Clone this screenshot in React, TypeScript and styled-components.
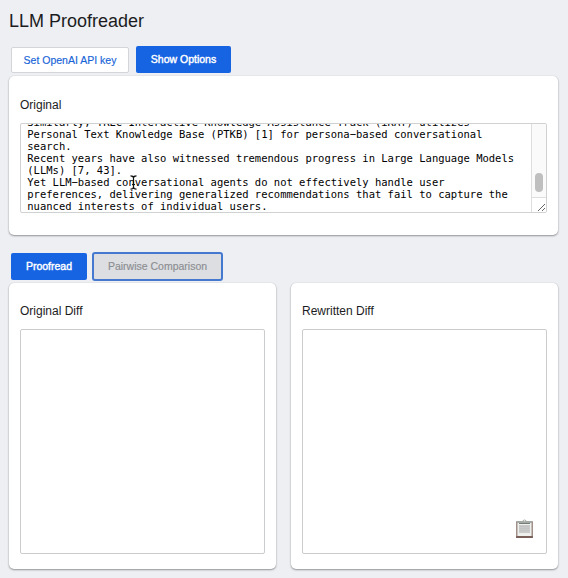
import React from "react";
import styled, { createGlobalStyle, css } from "styled-components";

const GlobalStyle = createGlobalStyle`
  * { box-sizing: border-box; }
  body {
    margin: 0;
    background: #edeff3;
    color: #1c1c1e;
    font-family: "Liberation Sans", Arial, sans-serif;
  }
`;

const Page = styled.main`
  height: 578px;
  padding: 10px 10px 9px 9px;
  display: flex;
  flex-direction: column;
  overflow: hidden;
`;

const Title = styled.h1`
  margin: 0;
  height: 36px;
  font-size: 18px;
  line-height: 22px;
  font-weight: 400;
  white-space: nowrap;
`;

const Toolbar = styled.div<{ $gap: number; $height: number; $top: number; $bottom: number }>`
  display: flex;
  align-items: center;
  gap: ${(p) => p.$gap}px;
  height: ${(p) => p.$height}px;
  padding: ${(p) => p.$top}px 0 ${(p) => p.$bottom}px 2px;
`;

const Button = styled.button<{ $variant: "outline" | "primary" | "disabled"; $width: number }>`
  width: ${(p) => p.$width}px;
  height: 27px;
  padding: 0;
  border-radius: 2px;
  font-family: inherit;
  font-size: 10.5px;
  line-height: 13px;
  white-space: nowrap;
  ${(p) =>
    p.$variant === "primary" &&
    css`
      border: 0;
      background: #1764e3;
      color: #fff;
      -webkit-text-stroke: 0.4px #fff;
    `}
  ${(p) =>
    p.$variant === "outline" &&
    css`
      height: 26px;
      margin-top: 1px;
      border: 1px solid #d3d5d9;
      background: #fff;
      color: #1764d8;
      -webkit-text-stroke: 0.15px #1764d8;
    `}
  ${(p) =>
    p.$variant === "disabled" &&
    css`
      height: 29px;
      border: 2px solid #4479cf;
      border-radius: 3px;
      background: #dcdee2;
      color: #8c8d91;
      -webkit-text-stroke: 0.15px #8c8d91;
    `}
`;

const Card = styled.section<{ $height: number; $top: number }>`
  flex: 1;
  height: ${(p) => p.$height}px;
  padding: ${(p) => p.$top}px 11px 0;
  border-radius: 5px;
  background: #fff;
  box-shadow: 0 1px 2px rgba(0, 0, 0, 0.38), 0 0 1px rgba(0, 0, 0, 0.16);
`;

const Rows = styled.div`
  display: flex;
  gap: 15px;
`;

const Label = styled.h2`
  margin: 0;
  height: 25px;
  font-size: 12px;
  line-height: 14px;
  font-weight: 400;
`;

const Editor = styled.div`
  display: flex;
  height: 90px;
  border: 1px solid #d0d1d3;
  border-radius: 2px;
  overflow: hidden;
  position: relative;
`;

const EditorText = styled.div`
  flex: 1;
  display: flex;
  flex-direction: column;
  justify-content: flex-end;
  padding: 0 0 0 6.3px;
  color: #000;
  font: 10.5px/12px "DejaVu Sans Mono", monospace;
  white-space: pre;
  overflow: hidden;
`;

const ScrollTrack = styled.div`
  width: 15px;
  display: flex;
  flex-direction: column;
  border-left: 1px solid #dedede;
  background: #fafafa;
`;

const ScrollThumb = styled.div`
  width: 8px;
  height: 19px;
  margin: 49px 0 5px 3px;
  border-radius: 4px;
  background: #bfbfbf;
`;

const ResizeCorner = styled.div`
  flex: 1;
  border-top: 1px solid #dedede;
  background: #fff;
  svg { display: block; margin: 5px 0 0 5px; }
`;

const TextCursor = styled.svg`
  position: absolute;
  left: 109px;
  top: 51px;
`;

const DiffBox = styled.div`
  height: 225px;
  border: 1px solid #cbcccd;
  border-radius: 2px;
  display: flex;
  align-items: flex-end;
  justify-content: flex-end;
  padding: 0 12px 14px 0;
`;

const lines = [
  "Similarly, TREC Interactive Knowledge Assistance Track (iKAT) utilizes",
  "Personal Text Knowledge Base (PTKB) [1] for persona−based conversational",
  "search.",
  "Recent years have also witnessed tremendous progress in Large Language Models",
  "(LLMs) [7, 43].",
  "Yet LLM−based conversational agents do not effectively handle user",
  "preferences, delivering generalized recommendations that fail to capture the",
  "nuanced interests of individual users.",
];

const ClipboardIcon = () => (
  <svg width="19" height="20" viewBox="0 0 19 20" aria-label="Copy">
    <rect x="1" y="2" width="17" height="17" rx="1" fill="#a09089" />
    <rect x="1" y="17" width="17" height="2" rx=".8" fill="#7a5f59" />
    <rect x="2.5" y="3.5" width="14" height="13.5" fill="#eef0ee" />
    <rect x="4" y="6" width="11" height="8" fill="#c9cac9" />
    <path d="M5 7.5h9M5 9.5h9M5 11.5h9" stroke="#bfc0c0" strokeWidth=".7" />
    <path d="M2 2h5.5Q8 .5 9.5.5T11.5 2H17v2H2Z" fill="#a3aaa6" />
    <path d="M4 4.5h11" stroke="#777e79" />
    <circle cx="9.5" cy="1.8" r=".7" fill="#e8ebe9" />
  </svg>
);

export default function App() {
  return (
    <>
      <GlobalStyle />
      <Page>
        <Title>LLM Proofreader</Title>
        <Toolbar $gap={7} $height={30} $top={0} $bottom={3}>
          <Button $variant="outline" $width={118}>Set OpenAI API key</Button>
          <Button $variant="primary" $width={95}>Show Options</Button>
        </Toolbar>
        <Rows>
          <Card $height={159} $top={22}>
            <Label>Original</Label>
            <Editor>
              <EditorText>
                {lines.map((line) => <div key={line}>{line}</div>)}
              </EditorText>
              <ScrollTrack>
                <ScrollThumb />
                <ResizeCorner>
                  <svg width="9" height="9" viewBox="0 0 9 9" stroke="#555" strokeWidth=".9">
                    <path d="M1 8L8 1M5 8L8 5" />
                  </svg>
                </ResizeCorner>
              </ScrollTrack>
              <TextCursor width="7" height="15" viewBox="0 0 7 15" fill="none">
                <path d="M.5.8Q3.5.8 3.5 3V12Q3.5 14.2.5 14.2M6.5.8Q3.5.8 3.5 3M3.5 12Q3.5 14.2 6.5 14.2M2 9.5H5" stroke="#111" strokeWidth="1.2" />
              </TextCursor>
            </Editor>
          </Card>
        </Rows>
        <Toolbar $gap={5} $height={48} $top={17} $bottom={2}>
          <Button $variant="primary" $width={76}>Proofread</Button>
          <Button $variant="disabled" $width={131}>Pairwise Comparison</Button>
        </Toolbar>
        <Rows>
          <Card $height={286} $top={21}>
            <Label>Original Diff</Label>
            <DiffBox />
          </Card>
          <Card $height={286} $top={21}>
            <Label>Rewritten Diff</Label>
            <DiffBox><ClipboardIcon /></DiffBox>
          </Card>
        </Rows>
      </Page>
    </>
  );
}
